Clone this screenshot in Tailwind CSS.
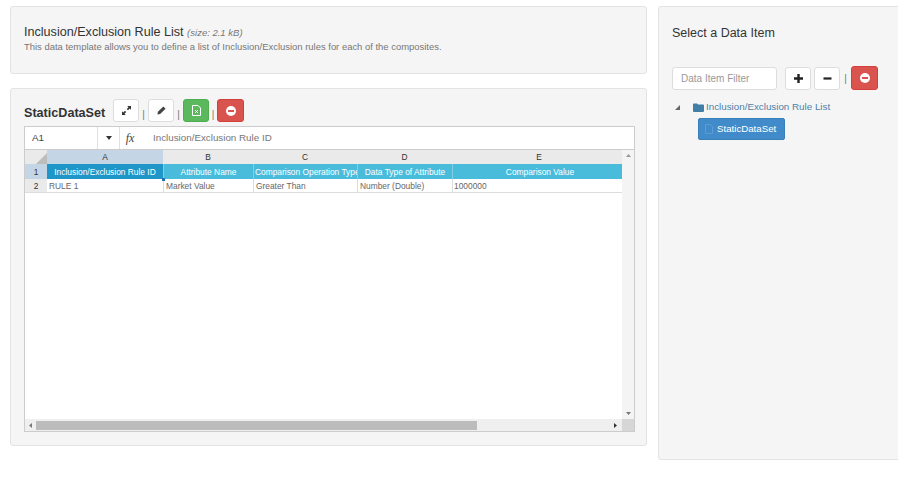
<!DOCTYPE html>
<html lang="en">

<head>
  <meta charset="UTF-8">
  <title>Inclusion/Exclusion Rule List</title>
  <script src="https://cdn.jsdelivr.net/npm/@tailwindcss/browser@4"></script>
</head>

<body class="bg-white w-[898px] h-[496px] overflow-hidden font-['Liberation_Sans',sans-serif] text-[#333]">
  <div class="flex items-start gap-[11px] pl-[10px] pt-[6px]">

    <!-- left column -->
    <div class="w-[637px] shrink-0">
      <div class="h-[68px] bg-[#f5f5f5] border border-[#e3e3e3] rounded-[3px] pl-[13px] pt-[18px]">
        <div class="text-[12.6px] leading-[15px] text-[#333]">Inclusion/Exclusion Rule List <em class="text-[9.5px] text-[#777]">(size: 2.1 kB)</em></div>
        <div class="text-[9.45px] leading-[13px] text-[#777]">This data template allows you to define a list of Inclusion/Exclusion rules for each of the composites.</div>
      </div>

      <div class="mt-[14px] h-[358px] bg-[#f5f5f5] border border-[#e3e3e3] rounded-[3px] pl-[13px] pt-[10px]">
        <div class="flex items-center h-[23px]">
          <span class="text-[12.6px] font-bold w-[89px] pt-[5px]">StaticDataSet</span>
          <button class="w-[26px] h-[23px] bg-white border border-[#ddd] rounded-[3px] flex items-center justify-center">
            <svg width="9" height="9" viewBox="0 0 9 9" fill="#333"><path d="M5.2 0H9v3.8L7.7 2.5 6 4.2 4.8 3l1.7-1.7zM3.8 9H0V5.2l1.3 1.3L3 4.8 4.2 6 2.5 7.7z"/></svg>
          </button>
          <span class="w-[9px] text-center text-[10px] text-[#777] pt-[8px]">|</span>
          <button class="w-[26px] h-[23px] bg-white border border-[#ddd] rounded-[3px] flex items-center justify-center">
            <svg width="9" height="9" viewBox="0 0 10 10" fill="#444"><path d="M7 0.5l2.5 2.5-6 6L0.5 9.5 1 6.5z"/></svg>
          </button>
          <span class="w-[9px] text-center text-[10px] text-[#777] pt-[8px]">|</span>
          <button class="w-[26px] h-[23px] bg-[#5cb85c] border border-[#4cae4c] rounded-[3px] flex items-center justify-center">
            <svg width="9" height="11" viewBox="0 0 9 11" fill="none" stroke="#fff" stroke-width="1"><path d="M.5.5h5.5l2.5 2.5v7.5h-8zM3 5l3 3M6 5L3 8"/></svg>
          </button>
          <span class="w-[8px] text-center text-[10px] text-[#777] pt-[8px]">|</span>
          <button class="w-[27px] h-[23px] bg-[#d9534f] border border-[#d43f3a] rounded-[3px] flex items-center justify-center">
            <svg width="10" height="10" viewBox="0 0 10 10"><circle cx="5" cy="5" r="5" fill="#fff"/><rect x="2" y="4" width="6" height="2" fill="#d9534f"/></svg>
          </button>
        </div>

        <!-- spreadsheet -->
        <div class="mt-[4px] w-[611px] h-[306px] bg-white border border-[#ccc] flex flex-col text-[8.4px] text-[#666]">
          <div class="h-[23px] shrink-0 flex items-center border-b border-[#ccc] text-[9.8px]">
            <div class="w-[72px] pl-[7px] text-[#444]">A1</div>
            <div class="w-[23px] h-full border-x border-[#e0e0e0] flex items-center justify-center text-[#333]">
              <svg width="6" height="4" viewBox="0 0 6 4" fill="#333"><path d="M0 0h6L3 4z"/></svg>
            </div>
            <div class="w-[20px] text-center font-['Liberation_Serif',serif] italic text-[12px] text-[#444]">fx</div>
            <div class="pl-[13px] text-[#777]">Inclusion/Exclusion Rule ID</div>
          </div>

          <div class="flex-1 flex min-h-0">
            <div class="flex-1 flex flex-col">
              <!-- column letters -->
              <div class="h-[14px] flex bg-[#eaeaea] text-[#333] leading-[14px] text-center">
                <div class="w-[22px] relative overflow-hidden">
                  <svg class="absolute right-0 bottom-0" width="11" height="11" viewBox="0 0 11 11" fill="#bdbdbd"><path d="M11 0v11H0z"/></svg>
                </div>
                <div class="w-[116px] bg-[#c4d5e5]">A</div>
                <div class="w-[90px]">B</div>
                <div class="w-[104px]">C</div>
                <div class="w-[95px]">D</div>
                <div class="w-[170px] pl-[4px]">E</div>
              </div>
              <!-- row 1 -->
              <div class="h-[15px] flex leading-[16px] text-center text-white">
                <div class="w-[22px] bg-[#c4d5e5] text-[#333]">1</div>
                <div class="w-[116px] bg-[#1e96c8] relative">Inclusion/Exclusion Rule ID
                  <div class="absolute right-[-2px] bottom-[-2px] w-[3px] h-[3px] bg-[#2a6fb0]"></div>
                </div>
                <div class="w-[90px] bg-[#49bcdc] border-l border-[#7fd0e6]">Attribute Name</div>
                <div class="w-[104px] bg-[#49bcdc] border-l border-[#7fd0e6] whitespace-nowrap overflow-hidden text-left pl-[1px]">Comparison Operation Type</div>
                <div class="w-[95px] bg-[#49bcdc] border-l border-[#7fd0e6]">Data Type of Attribute</div>
                <div class="w-[170px] bg-[#49bcdc] border-l border-[#7fd0e6] pl-[5px]">Comparison Value</div>
              </div>
              <!-- row 2 -->
              <div class="h-[14px] flex leading-[15px] border-b border-[#ddd]">
                <div class="w-[22px] bg-[#eaeaea] text-[#333] text-center">2</div>
                <div class="w-[116px] pl-[2px]">RULE 1</div>
                <div class="w-[90px] pl-[2px] border-l border-[#ddd]">Market Value</div>
                <div class="w-[104px] pl-[2px] border-l border-[#ddd]">Greater Than</div>
                <div class="w-[95px] pl-[2px] border-l border-[#ddd]">Number (Double)</div>
                <div class="w-[170px] pl-[1px] border-l border-[#ddd]">1000000</div>
              </div>
              <div class="flex-1"></div>
              <!-- horizontal scrollbar -->
              <div class="h-[12px] bg-[#efefef] flex items-center">
                <div class="w-[11px] flex justify-center">
                  <svg width="3" height="5" viewBox="0 0 3 5" fill="#777"><path d="M3 0v5L0 2.5z"/></svg>
                </div>
                <div class="w-[441px] h-[9px] bg-[#bcbcbc]"></div>
                <div class="flex-1 flex justify-end pr-[5px]">
                  <svg width="3" height="5" viewBox="0 0 3 5" fill="#333"><path d="M0 0v5l3-2.5z"/></svg>
                </div>
              </div>
            </div>
            <!-- vertical scrollbar -->
            <div class="w-[12px] flex flex-col items-center bg-[#f4f4f4]">
              <svg class="mt-[4px]" width="5" height="3" viewBox="0 0 5 3" fill="#999"><path d="M2.5 0L5 3H0z"/></svg>
              <div class="flex-1"></div>
              <svg class="mb-[4px]" width="5" height="3" viewBox="0 0 5 3" fill="#777"><path d="M0 0h5L2.5 3z"/></svg>
              <div class="w-full h-[12px] bg-[#d6d6d6]"></div>
            </div>
          </div>
        </div>
      </div>
    </div>

    <!-- right column -->
    <div class="w-[250px] shrink-0 h-[454px] bg-[#f5f5f5] border border-[#e3e3e3] rounded-[3px] pl-[13px] pt-[19px]">
      <div class="text-[12.5px] leading-[14px] text-[#333]">Select a Data Item</div>
      <div class="mt-[26px] flex items-center h-[24px]">
        <div class="w-[105px] h-[23px] bg-white border border-[#ddd] rounded-[3px] pl-[8px] text-[10px] leading-[21px] text-[#999]">Data Item Filter</div>
        <button class="ml-[8px] w-[26px] h-[23px] bg-white border border-[#ddd] rounded-[3px] flex items-center justify-center">
          <svg width="9" height="9" viewBox="0 0 9 9" fill="#222"><path d="M3.3 0h2.4v3.3H9v2.4H5.7V9H3.3V5.7H0V3.3h3.3z"/></svg>
        </button>
        <button class="ml-[3px] w-[26px] h-[23px] bg-white border border-[#ddd] rounded-[3px] flex items-center justify-center">
          <svg width="9" height="9" viewBox="0 0 9 9" fill="#222"><path d="M.5 3.4h8v2.2h-8z"/></svg>
        </button>
        <span class="w-[11px] text-center text-[10px] text-[#777]">|</span>
        <button class="w-[27px] h-[24px] bg-[#d9534f] border border-[#d43f3a] rounded-[3px] flex items-center justify-center">
          <svg width="10" height="10" viewBox="0 0 10 10"><circle cx="5" cy="5" r="5" fill="#fff"/><rect x="2" y="4" width="6" height="2" fill="#d9534f"/></svg>
        </button>
      </div>
      <!-- tree -->
      <div class="mt-[10px] flex items-center h-[14px] text-[9.8px] text-[#4f81a8]">
        <svg class="ml-[3px]" width="5" height="5" viewBox="0 0 5 5" fill="#666"><path d="M5 0v5H0z"/></svg>
        <svg class="ml-[13px]" width="11" height="9" viewBox="0 0 11 9" fill="#3f7fa8"><path d="M0 1.5A1 1 0 0 1 1 .5h3l1 1h5a1 1 0 0 1 1 1V8a1 1 0 0 1-1 1H1a1 1 0 0 1-1-1z"/></svg>
        <span class="ml-[2px]">Inclusion/Exclusion Rule List</span>
      </div>
      <div class="ml-[26px] mt-[4px] w-[87px] h-[22px] bg-[#428bca] border border-[#3a7fb8] rounded-[2px] flex items-center pl-[6px] text-[9.7px] text-white">
        <svg width="8" height="10" viewBox="0 0 8 10" fill="none" stroke="#5e9dd3"><path d="M.5.5h5l2 2v7h-7z"/></svg>
        <span class="ml-[4px]">StaticDataSet</span>
      </div>
    </div>

  </div>
</body>

</html>
